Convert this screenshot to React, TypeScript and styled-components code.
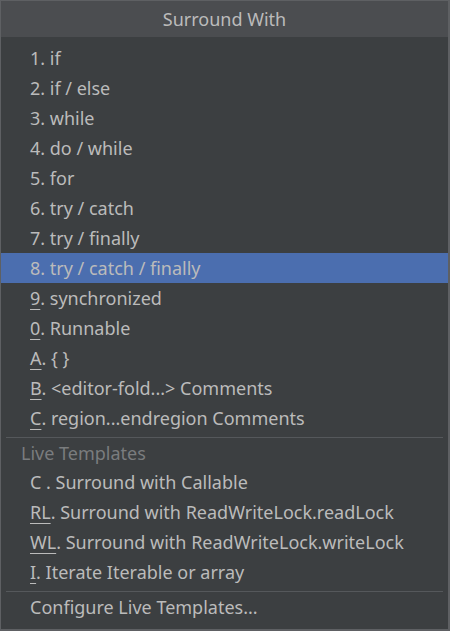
import styled, { createGlobalStyle } from "styled-components";

const GlobalStyle = createGlobalStyle`
  html, body {
    margin: 0;
    padding: 0;
    background: #3c3f41;
  }
  body {
    font-family: "Noto Sans", "Open Sans", sans-serif;
  }
`;

type Entry = {
  key: string;
  label: string;
  underline?: boolean;
  selected?: boolean;
};

const actions: Entry[] = [
  { key: "1", label: ". if" },
  { key: "2", label: ". if / else" },
  { key: "3", label: ". while" },
  { key: "4", label: ". do / while" },
  { key: "5", label: ". for" },
  { key: "6", label: ". try / catch" },
  { key: "7", label: ". try / finally" },
  { key: "8", label: ". try / catch / finally", selected: true },
  { key: "9", label: ". synchronized", underline: true },
  { key: "0", label: ". Runnable", underline: true },
  { key: "A", label: ". { }", underline: true },
  { key: "B", label: ". <editor-fold...> Comments", underline: true },
  { key: "C", label: ". region...endregion Comments", underline: true },
];

const templates: Entry[] = [
  { key: "C ", label: ". Surround with Callable" },
  { key: "RL", label: ". Surround with ReadWriteLock.readLock", underline: true },
  { key: "WL", label: ". Surround with ReadWriteLock.writeLock", underline: true },
  { key: "I", label: ". Iterate Iterable or array", underline: true },
];

const App = () => {
  return (
    <>
      <GlobalStyle />
      <Popup>
        <Header>Surround With</Header>
        <List>
          {actions.map((a) => (
            <Item key={a.key + a.label} $selected={a.selected}>
              {a.underline ? <Mnemonic>{a.key}</Mnemonic> : a.key}
              {a.label}
            </Item>
          ))}
          <Separator $top={4} $bottom={2} />
          <SectionLabel>Live Templates</SectionLabel>
          {templates.map((t) => (
            <Item key={t.key + t.label}>
              {t.underline ? <Mnemonic>{t.key}</Mnemonic> : t.key}
              {t.label}
            </Item>
          ))}
          <Separator $top={4} $bottom={0} />
          <Item>Configure Live Templates...</Item>
        </List>
      </Popup>
    </>
  );
};

export default App;

const Popup = styled.div`
  width: 450px;
  height: 631px;
  box-sizing: border-box;
  border-top: 1px solid #5e6063;
  border-left: 1px solid #5e6063;
  border-right: 2px solid #5e6063;
  border-bottom: 2px solid #5e6063;
  background: #3c3f41;
  display: flex;
  flex-direction: column;
  overflow: hidden;
`;

const Header = styled.div`
  height: 36px;
  background: #4b4d50;
  color: #bbbbbb;
  font-size: 18px;
  display: flex;
  align-items: center;
  justify-content: center;
`;

const List = styled.div`
  display: flex;
  flex-direction: column;
  padding-top: 6px;
`;

const Item = styled.div<{ $selected?: boolean }>`
  height: 30px;
  line-height: 30px;
  padding-left: 29px;
  font-size: 18px;
  color: #bbbbbb;
  white-space: pre;
  background: ${(p) => (p.$selected ? "#4b6eaf" : "transparent")};
`;

const Mnemonic = styled.span`
  text-decoration: underline;
  text-underline-offset: 4px;
`;

const Separator = styled.div<{ $top: number; $bottom: number }>`
  height: 1px;
  margin: ${(p) => `${p.$top}px 5px ${p.$bottom}px 5px`};
  background: #55585b;
`;

const SectionLabel = styled.div`
  height: 27px;
  line-height: 27px;
  padding-left: 20px;
  font-size: 18px;
  color: #7a7c7e;
`;
